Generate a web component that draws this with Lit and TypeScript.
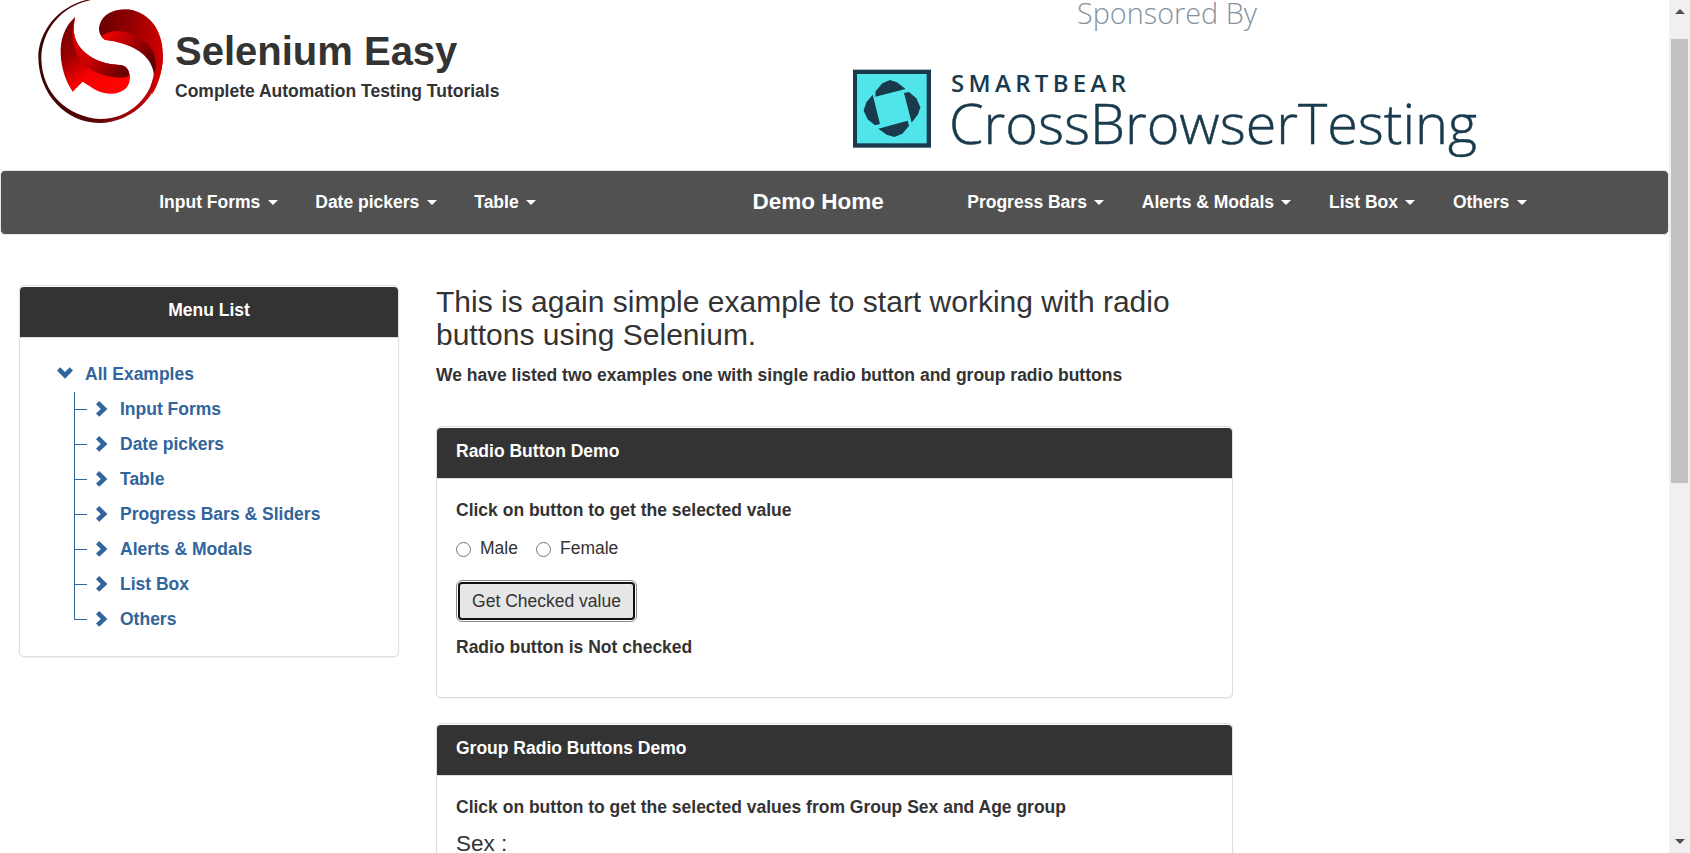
import { LitElement, html, svg, css } from "lit";
import { customElement, property } from "lit/decorators.js";

@customElement("brand-logo")
class BrandLogo extends LitElement {
  static styles = css`
    :host { display: block; width: 150px; height: 130px; }
    svg { display: block; }
  `;
  render() {
    return html`<svg width="150" height="130" viewBox="0 0 450 390">
      <defs>
        <linearGradient id="ring" x1="0" y1="0" x2="1" y2="0">
          <stop offset="0" stop-color="#3a0506" /><stop offset=".45" stop-color="#5c0507" />
          <stop offset=".75" stop-color="#a50508" /><stop offset="1" stop-color="#c80407" />
        </linearGradient>
        <linearGradient id="top" x1="0" y1="0" x2="1" y2=".25">
          <stop offset="0" stop-color="#640001" /><stop offset=".45" stop-color="#8e0001" />
          <stop offset="1" stop-color="#cc0001" />
        </linearGradient>
        <linearGradient id="band" x1="0" y1="0" x2="1" y2=".6">
          <stop offset="0" stop-color="#f00" /><stop offset=".35" stop-color="#c80001" />
          <stop offset="1" stop-color="#5e0001" />
        </linearGradient>
        <linearGradient id="wing" x1="0" y1="0" x2=".7" y2="1">
          <stop offset="0" stop-color="#6e0001" /><stop offset=".4" stop-color="#990001" />
          <stop offset=".68" stop-color="#f40001" /><stop offset="1" stop-color="#ff0505" />
        </linearGradient>
        <linearGradient id="fold" x1="0" y1="0" x2="1" y2=".75">
          <stop offset="0" stop-color="#e60001" /><stop offset=".5" stop-color="#cf0001" />
          <stop offset="1" stop-color="#6d0001" />
        </linearGradient>
      </defs>
      <path fill="url(#ring)" d="M188 -4C92 10 25 90 25 172C26 282 108 369 207 369C315 369 399 275 399 165L373 200C373 285 302 357 210 357C112 350 36 280 34 176C34 95 92 16 188 -1Z" />
      <path fill="url(#top)" d="M225 119C208 108 204 90 209 74C218 44 248 28 287 28C350 31 399 82 399 168C398 218 382 258 366 284C371 258 375 225 373 203C360 155 310 125 225 119Z" />
      <path fill="url(#band)" d="M213 110C230 95 251 92 268 94C334 99 380 143 378 200L372 224C366 165 305 129 225 120Z" />
      <path fill="url(#wing)" d="M136 50C103 80 90 120 92 163C94 205 108 247 128 275L158 245C190 265 209 282 247 281C282 278 300 260 300 230C298 207 287 196 270 195C231 193 195 184 164 157C132 127 125 93 136 50Z" />
      <path fill="url(#fold)" d="M136 50C118 95 126 166 175 203C207 226 247 235 288 232Q298 230 298 222C295 204 283 195 267 195C231 193 195 184 164 157C132 127 125 93 136 50Z" />
    </svg>`;
  }
}

@customElement("sponsor-banner")
class SponsorBanner extends LitElement {
  static styles = css`
    :host { display: block; width: 700px; height: 170px; }
    svg { display: block; }
    text { font-family: "Open Sans", "Noto Sans", sans-serif; }
    .by { font-size: 29px; font-weight: 300; fill: #85929e; }
    .bear { font-size: 24px; font-weight: 600; fill: #183a4c; }
    .cbt { font-size: 55.5px; font-weight: 300; fill: #183a4c; stroke: #183a4c; stroke-width: 0.5px; }
  `;
  render() {
    return html`<svg width="700" height="170" viewBox="820 0 700 170">
      <text class="by" x="1077" y="23.6" textLength="180" lengthAdjust="spacingAndGlyphs">Sponsored By</text>
      <g transform="translate(840 60) scale(.33333)">
        <rect x="39" y="29" width="234" height="234" fill="#183a4c" />
        <rect x="51" y="42" width="209" height="208" fill="#50e5eb" />
        <g fill="#183a4c">
          <path d="M106 110L107 94L127 70L150 60L171 67L197 87Z" />
          <path d="M192 99L207 96L229 115L241 142L234 163L215 188Z" />
          <path d="M115 206L203 182L207 198L187 221L163 231L140 224Z" />
          <path d="M98 104L120 192L105 196L83 178L71 152L79 127Z" />
        </g>
      </g>
      <text class="bear" x="951" y="91.5" textLength="175">SMARTBEAR</text>
      <text class="cbt" x="949" y="144" textLength="528" lengthAdjust="spacingAndGlyphs">CrossBrowserTesting</text>
    </svg>`;
  }
}

@customElement("nav-link")
class NavLink extends LitElement {
  @property() label = "";
  static styles = css`
    :host { display: flex; align-items: center; padding: 0 18.75px; color: #fff; font-weight: 700; white-space: pre; }
    .caret { margin: 1px 0 0 7.4px; border: 5px solid transparent; border-top-color: #fff; border-bottom: 0; }
  `;
  render() {
    return html`<span>${this.label}</span><span class="caret"></span>`;
  }
}

@customElement("demo-panel")
class DemoPanel extends LitElement {
  @property() heading = "";
  static styles = css`
    :host { display: block; box-sizing: border-box; border: 1px solid #ddd; border-radius: 5px; padding-top: 1px; box-shadow: 0 1px 1px rgba(0, 0, 0, 0.05); background: #fff; }
    .head { height: 50px; box-sizing: border-box; padding: 11px 19px 0; background: #333; color: #fff; font-weight: 700; border-bottom: 0; border-radius: 4px 4px 0 0; }
    .body { border-top: 1px solid #ddd; padding: 0 19px; }
    :host([centered]) .head { text-align: center; }
    :host([centered]) .body { padding: 0; }
  `;
  render() {
    return html`<div class="head">${this.heading}</div><div class="body"><slot></slot></div>`;
  }
}

const chevron = svg`<path d="M0 3.2L3.2 0L11.4 7.9L3.2 15.8L0 12.6L4.8 7.9Z" fill="#31659c" />`;

@customElement("app-root")
class AppRoot extends LitElement {
  static styles = css`
    :host { display: grid; grid-template-columns: 1669px 21px; height: 853px; overflow: hidden; background: #fff; color: #333; font: 17.5px/25px "Liberation Sans", Arial, sans-serif; }
    .page { height: 853px; overflow: hidden; }
    .header { display: flex; height: 170px; }
    .header brand-logo { margin-left: 30px; }
    .titles { width: 645px; margin-left: -5px; padding-top: 28px; }
    .title { font-size: 40px; line-height: 46px; font-weight: 700; margin: 0; }
    .tagline { font-weight: 700; margin-top: 5px; }
    .nav { display: flex; width: 1669px; height: 65px; box-sizing: border-box; border: 1px solid #e7e7e7; border-radius: 5px; background: #515151; padding-left: 139.5px; }
    .group { display: flex; padding-bottom: 1px; }
    .left { width: 612px; }
    .home { width: 196px; font-size: 22.5px; font-weight: 700; color: #fff; line-height: 62px; }
    .columns { display: flex; }
    .side { margin: 50px 0 0 19px; width: 380px; height: 372px; }
    .tree { padding: 24px 0 0 37px; color: #31659c; font-weight: 700; }
    .root { display: flex; align-items: center; height: 25px; }
    .root svg { margin-bottom: 4px; }
    .root span { margin-left: 12px; }
    .branches { margin: 5px 0 0 17px; }
    .branch { display: flex; height: 35px; }
    .rail { width: 12px; height: 17px; border-bottom: 1px solid #31659c; border-left: 1px solid #31659c; }
    .stem { width: 0; height: 35px; border-left: 1px solid #31659c; margin-left: -13px; margin-right: 12px; }
    .branch.last .stem { border-color: transparent; }
    .branch svg { margin: 8.5px 12px 0 9px; }
    .branch .name { padding-top: 5px; }
    .main { width: 797px; margin: 50px 0 0 37px; }
    .lead { font-size: 30px; line-height: 33px; font-weight: 400; margin: 0; width: 780px; }
    .note { font-weight: 700; margin-top: 12px; }
    .first { margin-top: 38px; height: 272px; }
    .second { margin-top: 25px; height: 300px; }
    .strong { font-weight: 700; padding-top: 19px; }
    .radios { display: flex; align-items: center; margin-top: 13px; height: 25px; }
    .radio { width: 15px; height: 15px; box-sizing: border-box; border: 1px solid #767676; border-radius: 50%; background: #fff; margin: 2px 9px 0 0; }
    .radios .text { width: 56px; }
    .button { display: block; width: 177px; height: 38px; margin: 21px 0 0 2px; padding: 0; border: 2px solid #101010; border-radius: 4px; background: #e6e6e6; color: #333; font: inherit; outline: 1px solid #8c8c8c; outline-offset: 1px; }
    .result { font-weight: 700; margin-top: 15px; }
    .sex { font-size: 22.5px; line-height: 25px; margin-top: 11px; }
    .scroll { background: #f0f0f0; display: flex; flex-direction: column; align-items: center; height: 853px; }
    .up { border: 5px solid transparent; border-top: 0; border-bottom-color: #505050; margin-top: 9px; }
    .thumb { width: 17px; height: 444px; background: #c1c1c1; margin-top: 25px; }
    .down { border: 5px solid transparent; border-bottom: 0; border-top-color: #505050; margin-top: 356px; }
  `;
  render() {
    const left = ["Input Forms", "Date pickers", "Table"];
    const right = ["Progress Bars", "Alerts & Modals", "List Box", "Others"];
    const tree = ["Input Forms", "Date pickers", "Table", "Progress Bars & Sliders", "Alerts & Modals", "List Box", "Others"];
    return html`
      <div class="page">
        <div class="header">
          <brand-logo></brand-logo>
          <div class="titles">
            <h1 class="title">Selenium Easy</h1>
            <div class="tagline">Complete Automation Testing Tutorials</div>
          </div>
          <sponsor-banner></sponsor-banner>
        </div>
        <div class="nav">
          <div class="group left">${left.map((l) => html`<nav-link label=${l}></nav-link>`)}</div>
          <div class="home">Demo Home</div>
          <div class="group">${right.map((l) => html`<nav-link label=${l}></nav-link>`)}</div>
        </div>
        <div class="columns">
          <demo-panel class="side" heading="Menu List" centered>
            <div class="tree">
              <div class="root">
                <svg width="16" height="12" viewBox="0 0 15.8 11.4"><g transform="translate(15.8 0) rotate(90)">${chevron}</g></svg>
                <span>All Examples</span>
              </div>
              <div class="branches">
                ${tree.map((t, i) => html`<div class="branch ${i === tree.length - 1 ? "last" : ""}">
                  <div class="rail"></div><div class="stem"></div>
                  <svg width="12" height="16" viewBox="0 0 12 16">${chevron}</svg>
                  <span class="name">${t}</span>
                </div>`)}
              </div>
            </div>
          </demo-panel>
          <div class="main">
            <h3 class="lead">This is again simple example to start working with radio buttons using Selenium.</h3>
            <div class="note">We have listed two examples one with single radio button and group radio buttons</div>
            <demo-panel class="first" heading="Radio Button Demo">
              <div class="strong">Click on button to get the selected value</div>
              <div class="radios">
                <span class="radio"></span><span class="text">Male</span>
                <span class="radio"></span><span class="text">Female</span>
              </div>
              <button class="button">Get Checked value</button>
              <div class="result">Radio button is Not checked</div>
            </demo-panel>
            <demo-panel class="second" heading="Group Radio Buttons Demo">
              <div class="strong">Click on button to get the selected values from Group Sex and Age group</div>
              <div class="sex">Sex :</div>
            </demo-panel>
          </div>
        </div>
      </div>
      <div class="scroll"><div class="up"></div><div class="thumb"></div><div class="down"></div></div>
    `;
  }
}
